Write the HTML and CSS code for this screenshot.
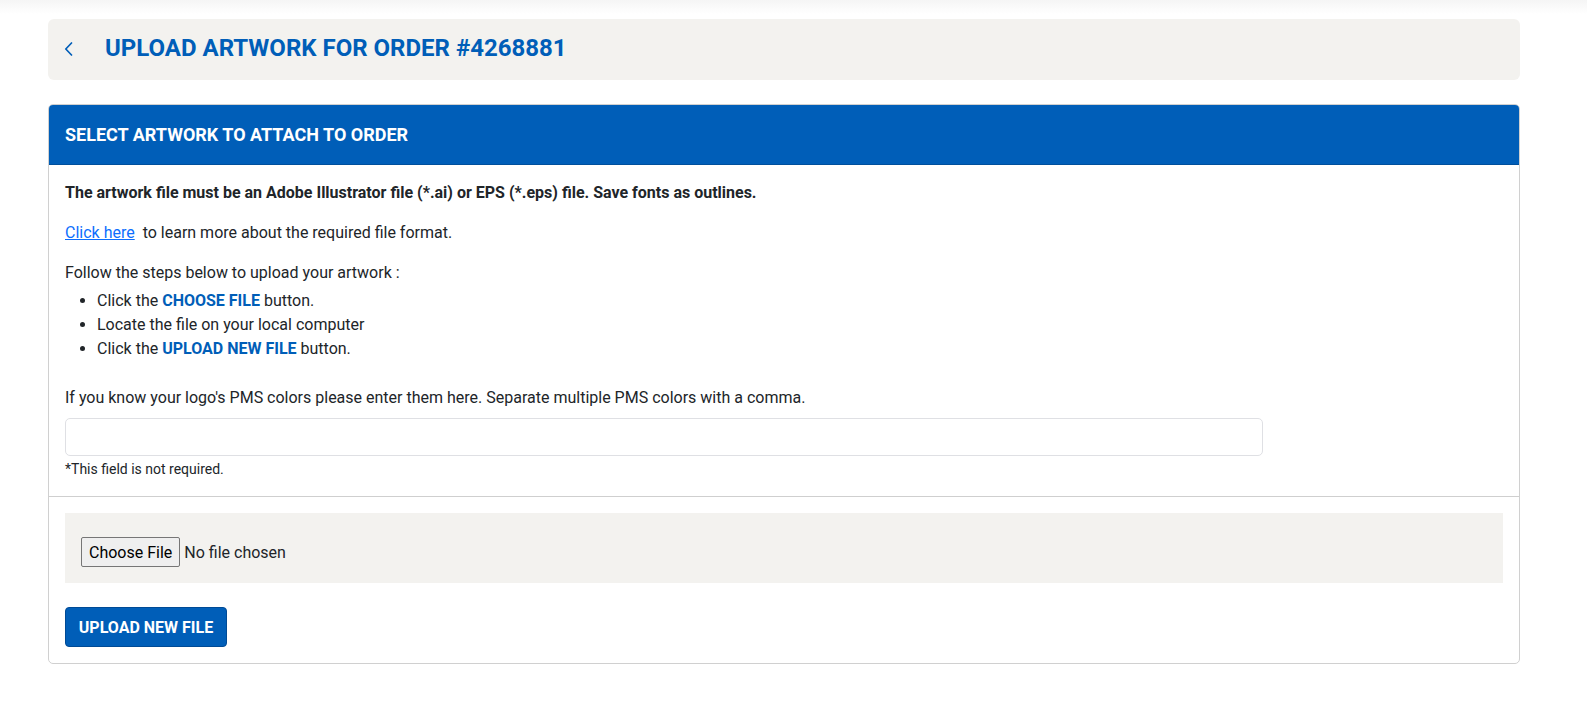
FILE: index.html
```html
<!DOCTYPE html>
<html lang="en">
<head>
    <meta charset="UTF-8">
    <meta name="viewport" content="width=device-width, initial-scale=1.0">
    <title>Upload Artwork for Order #4268881</title>
    <link rel="stylesheet" href="styles.css">
</head>
<body>
    <div class="page">
        <div class="page-head">
            <a href="#" class="back" aria-label="Back">
                <svg width="9" height="14" viewBox="0 0 9 14" fill="none">
                    <path d="M7.5 1 L1.8 7 L7.5 13" stroke="#005eb8" stroke-width="1.7" stroke-linecap="round" stroke-linejoin="round"/>
                </svg>
            </a>
            <h1>Upload Artwork for Order #4268881</h1>
        </div>

        <div class="card">
            <div class="card-header">Select artwork to attach to order</div>
            <div class="card-body">
                <p class="strong">The artwork file must be an Adobe Illustrator file (*.ai) or EPS (*.eps) file. Save fonts as outlines.</p>
                <p><a href="#" class="link">Click here</a>&nbsp; to learn more about the required file format.</p>
                <p class="steps-intro">Follow the steps below to upload your artwork :</p>
                <ul class="steps">
                    <li>Click the <b>CHOOSE FILE</b> button.</li>
                    <li>Locate the file on your local computer</li>
                    <li>Click the <b>UPLOAD NEW FILE</b> button.</li>
                </ul>
                <label for="pms" class="pms-label">If you know your logo's PMS colors please enter them here. Separate multiple PMS colors with a comma.</label>
                <div class="row">
                    <input type="text" id="pms" class="pms-input">
                </div>
                <small class="hint">*This field is not required.</small>
            </div>
            <div class="card-footer">
                <div class="file-box">
                    <input type="file" id="artwork">
                </div>
                <button type="button" class="btn-upload">Upload New File</button>
            </div>
        </div>
    </div>
</body>
</html>
```

FILE: styles.css
```css
body {
    margin: 0;
    font-family: Roboto, "Liberation Sans", Arial, sans-serif;
    font-size: 16px;
    line-height: 1.5;
    color: #212529;
    background: #fff linear-gradient(#f5f5f5, #fff 14px) no-repeat;
}

.page {
    width: 1472px;
    margin-left: 48px;
    padding-top: 19px;
}

.page-head {
    display: flex;
    align-items: center;
    height: 61px;
    background-color: #f3f2ef;
    border-radius: 6px;
    padding-left: 16px;
}

.back {
    display: flex;
    width: 41px;
    margin-top: -1px;
}

h1 {
    margin: 0;
    font-size: 24px;
    font-weight: 700;
    text-transform: uppercase;
    color: #005eb8;
    line-height: 1.2;
    margin-top: -2px;
}

.card {
    margin-top: 24px;
    border: 1px solid #d0d0d0;
    border-radius: 5px;
    overflow: hidden;
}

.card-header {
    height: 59px;
    display: flex;
    align-items: center;
    padding: 0 16px;
    background-color: #005eb8;
    border-bottom: 1px solid #004f9c;
    color: #fff;
    font-size: 18px;
    font-weight: 700;
    text-transform: uppercase;
}

.card-body {
    padding: 16px;
}

.card-body p {
    margin: 0 0 16px;
}

.strong {
    font-weight: 700;
}

.link {
    color: #0d6efd;
}

.card-body .steps-intro {
    margin-bottom: 4px;
}

.steps {
    margin: 0 0 25px;
    padding-left: 32px;
}

.steps b {
    color: #005eb8;
}

.pms-label {
    display: block;
    margin-bottom: 8px;
}

.pms-input {
    display: block;
    box-sizing: border-box;
    width: 83.333%;
    height: 38px;
    border: 1px solid #dfe0e4;
    border-radius: 5px;
    padding: 6px 12px;
    font: inherit;
}

.hint {
    display: block;
    margin-top: 3px;
    font-size: 14px;
    line-height: 21px;
}

.card-footer {
    border-top: 1px solid #cfcfcf;
    padding: 16px;
}

.file-box {
    background-color: #f3f2ef;
    padding: 24px 16px 16px;
    height: 30px;
    display: flex;
    align-items: center;
}

.file-box input {
    font-family: Roboto, "Liberation Sans", Arial, sans-serif;
    font-size: 16px;
    color: #212529;
    margin-top: 0;
}

.file-box input::file-selector-button {
    font: inherit;
    height: 30px;
    padding: 0 7px;
    margin-right: 4px;
    background-color: #efefef;
    border: 1px solid #767676;
    border-radius: 2px;
    color: #000;
}

.btn-upload {
    margin-top: 24px;
    display: block;
    width: 162px;
    height: 40px;
    background-color: #005eb8;
    color: #fff;
    border: 1px solid #004a95;
    border-radius: 4px;
    font-family: Roboto, "Liberation Sans", Arial, sans-serif;
    font-size: 16px;
    font-weight: 700;
    text-transform: uppercase;
    cursor: pointer;
}
```
